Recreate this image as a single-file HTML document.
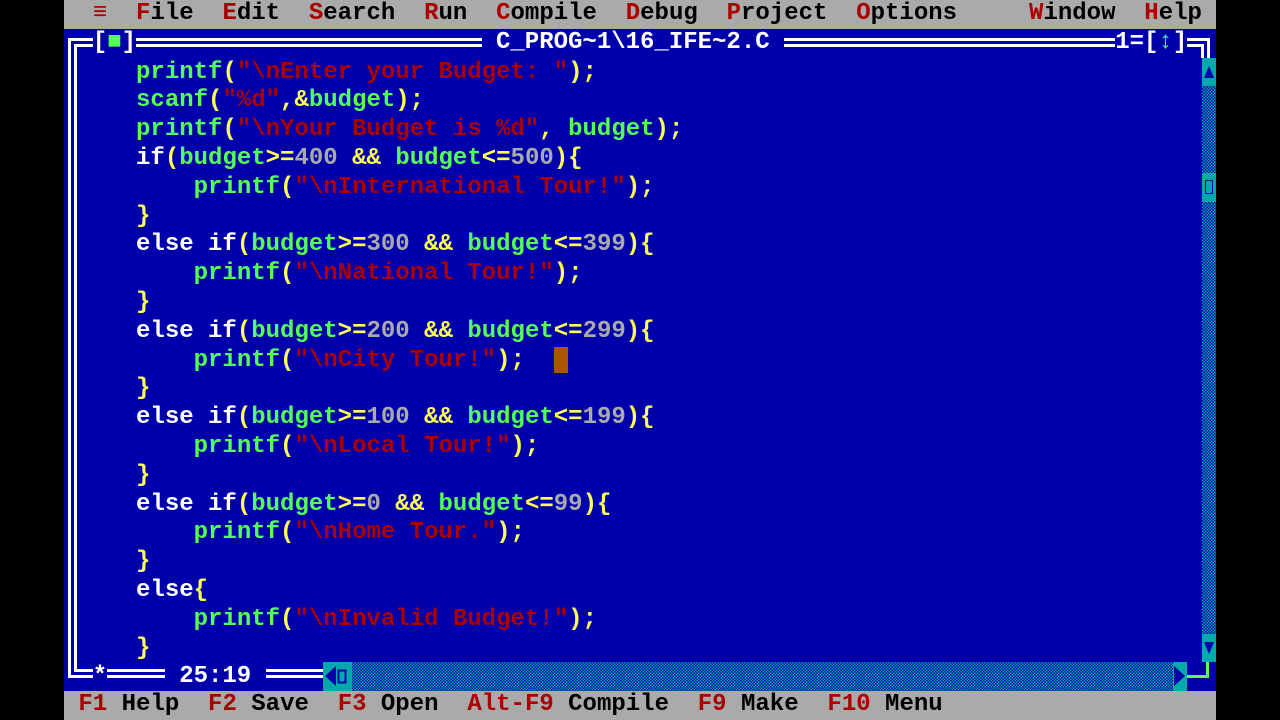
<!DOCTYPE html>
<html><head><meta charset="utf-8"><style>
html,body{margin:0;padding:0;background:#000;width:1280px;height:720px;overflow:hidden}
#scr{position:absolute;left:64px;top:0;width:1152px;height:720px;background:#0000AA;overflow:hidden}
pre{margin:0;font-family:"Liberation Mono","DejaVu Sans Mono",monospace;font-weight:bold;font-size:24px;line-height:28.8px;white-space:pre;position:absolute;left:0}
.bar{background:#AAAAAA;color:#000;width:1152px;height:28.8px}
.k{color:#AA0000}
.g{color:#55FF55}.y{color:#FFFF55}.r{color:#AA0000}.w{color:#FFFFFF}.n{color:#AAAAAA}
.ln{position:absolute;background:#fff}
.chk{position:absolute;background-color:#0000AA;background-image:repeating-conic-gradient(#00AAAA 0 25%,#0000AA 0 50%);background-size:3px 3px}
.cy{position:absolute;background:#00AAAA}
.t{position:absolute;color:#fff;top:28.8px}
</style></head><body><div id="scr">
<pre class="bar" style="top:0">  <span class="k">≡</span>  <span class="k">F</span>ile  <span class="k">E</span>dit  <span class="k">S</span>earch  <span class="k">R</span>un  <span class="k">C</span>ompile  <span class="k">D</span>ebug  <span class="k">P</span>roject  <span class="k">O</span>ptions     <span class="k">W</span>indow  <span class="k">H</span>elp</pre>

<div class="ln" style="left:4px;top:38px;width:1142px;height:3px"></div>
<div class="ln" style="left:10px;top:44px;width:1130px;height:3px"></div>
<div class="ln" style="left:4px;top:38px;width:3px;height:640px"></div>
<div class="ln" style="left:10px;top:44px;width:3px;height:628px"></div>
<div class="ln" style="left:4px;top:675px;width:256px;height:3px"></div>
<div class="ln" style="left:10px;top:669px;width:250px;height:3px"></div>
<div class="ln" style="left:1143px;top:38px;width:3px;height:20px"></div>
<div class="ln" style="left:1137px;top:44px;width:3px;height:14px"></div>

<div style="position:absolute;left:28.8px;top:30px;width:43.2px;height:26px;background:#0000AA"></div>
<div style="position:absolute;left:417.6px;top:30px;width:302.4px;height:26px;background:#0000AA"></div>
<div style="position:absolute;left:1051.2px;top:30px;width:72px;height:26px;background:#0000AA"></div>
<pre class="t" style="left:28.8px">[<span class="g">■</span>]</pre>
<pre class="t" style="left:417.6px"> C_PROG~1\16_IFE~2.C </pre>
<pre class="t" style="left:1051.2px">1=[<span class="g">↕</span>]</pre>

<div style="position:absolute;left:28.8px;top:664px;width:14.4px;height:26px;background:#0000AA"></div>
<pre style="left:28.8px;top:663.4px;color:#fff">*</pre>
<div style="position:absolute;left:100.8px;top:664px;width:100.8px;height:26px;background:#0000AA"></div>
<pre style="left:100.8px;top:663.4px;color:#fff"> 25:19 </pre>

<div class="chk" style="left:1137.6px;top:57.6px;width:14.4px;height:604.8px"></div>
<div class="cy" style="left:1137.6px;top:57.6px;width:14.4px;height:28.8px"><svg width="14" height="29"><polygon points="2,20 12,20 7,8" fill="#0000AA"/></svg></div>
<div class="cy" style="left:1137.6px;top:172.8px;width:14.4px;height:28.8px"><div style="position:absolute;left:3px;top:7px;width:6px;height:12px;border:1.5px solid #0000AA"></div></div>
<div class="cy" style="left:1137.6px;top:633.6px;width:14.4px;height:28.8px"><svg width="14" height="29"><polygon points="2,8 12,8 7,20" fill="#0000AA"/></svg></div>
<div class="chk" style="left:259.2px;top:662.4px;width:864px;height:28.8px"></div>
<div class="cy" style="left:259.2px;top:662.4px;width:28.8px;height:28.8px"><svg width="29" height="29"><polygon points="2,14 13,4 13,24" fill="#0000AA"/><rect x="15.5" y="8.5" width="7" height="12" fill="none" stroke="#0000AA" stroke-width="2"/></svg></div>
<div class="cy" style="left:1108.8px;top:662.4px;width:14.4px;height:28.8px"><svg width="14" height="29"><polygon points="1,4 12,14 1,24" fill="#0000AA"/></svg></div>
<div style="position:absolute;left:1123.2px;top:675px;width:21px;height:3px;background:#55FF55"></div>
<div style="position:absolute;left:1142px;top:662px;width:3px;height:16px;background:#55FF55"></div>

<div style="position:absolute;left:489.6px;top:347px;width:14.4px;height:26px;background:#AA5500"></div>

<pre style="top:58.6px">     <span class="g">printf</span><span class="y">(</span><span class="r">"\nEnter your Budget: "</span><span class="y">);</span>
     <span class="g">scanf</span><span class="y">(</span><span class="r">"%d"</span><span class="y">,&amp;</span><span class="g">budget</span><span class="y">);</span>
     <span class="g">printf</span><span class="y">(</span><span class="r">"\nYour Budget is %d"</span><span class="y">,</span> <span class="g">budget</span><span class="y">);</span>
     <span class="w">if</span><span class="y">(</span><span class="g">budget</span><span class="y">&gt;=</span><span class="n">400</span> <span class="y">&amp;&amp;</span> <span class="g">budget</span><span class="y">&lt;=</span><span class="n">500</span><span class="y">){</span>
         <span class="g">printf</span><span class="y">(</span><span class="r">"\nInternational Tour!"</span><span class="y">);</span>
     <span class="y">}</span>
     <span class="w">else if</span><span class="y">(</span><span class="g">budget</span><span class="y">&gt;=</span><span class="n">300</span> <span class="y">&amp;&amp;</span> <span class="g">budget</span><span class="y">&lt;=</span><span class="n">399</span><span class="y">){</span>
         <span class="g">printf</span><span class="y">(</span><span class="r">"\nNational Tour!"</span><span class="y">);</span>
     <span class="y">}</span>
     <span class="w">else if</span><span class="y">(</span><span class="g">budget</span><span class="y">&gt;=</span><span class="n">200</span> <span class="y">&amp;&amp;</span> <span class="g">budget</span><span class="y">&lt;=</span><span class="n">299</span><span class="y">){</span>
         <span class="g">printf</span><span class="y">(</span><span class="r">"\nCity Tour!"</span><span class="y">);</span>
     <span class="y">}</span>
     <span class="w">else if</span><span class="y">(</span><span class="g">budget</span><span class="y">&gt;=</span><span class="n">100</span> <span class="y">&amp;&amp;</span> <span class="g">budget</span><span class="y">&lt;=</span><span class="n">199</span><span class="y">){</span>
         <span class="g">printf</span><span class="y">(</span><span class="r">"\nLocal Tour!"</span><span class="y">);</span>
     <span class="y">}</span>
     <span class="w">else if</span><span class="y">(</span><span class="g">budget</span><span class="y">&gt;=</span><span class="n">0</span> <span class="y">&amp;&amp;</span> <span class="g">budget</span><span class="y">&lt;=</span><span class="n">99</span><span class="y">){</span>
         <span class="g">printf</span><span class="y">(</span><span class="r">"\nHome Tour."</span><span class="y">);</span>
     <span class="y">}</span>
     <span class="w">else</span><span class="y">{</span>
         <span class="g">printf</span><span class="y">(</span><span class="r">"\nInvalid Budget!"</span><span class="y">);</span>
     <span class="y">}</span></pre>

<pre class="bar" style="top:691.2px"> <span class="k">F1</span> Help  <span class="k">F2</span> Save  <span class="k">F3</span> Open  <span class="k">Alt-F9</span> Compile  <span class="k">F9</span> Make  <span class="k">F10</span> Menu</pre>
</div></body></html>
